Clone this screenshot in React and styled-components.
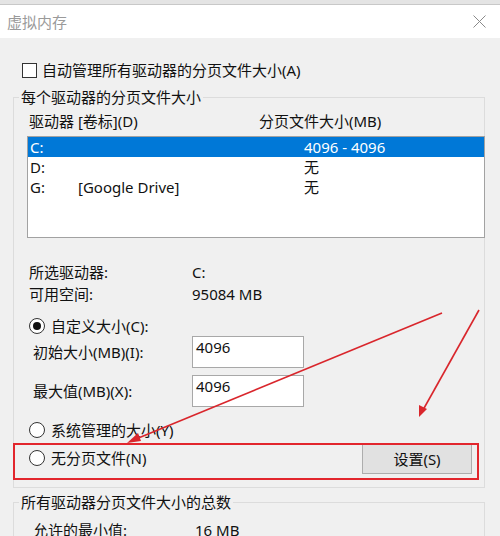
import React from "react";
import styled, { createGlobalStyle } from "styled-components";

const Global = createGlobalStyle`
  html, body { margin: 0; padding: 0; }
  body {
    background: #f0f0f0;
    font-family: "Noto Sans", "Noto Sans CJK SC", sans-serif;
    font-size: 15px;
    color: #111;
  }
`;

const Page = styled.div`
  position: relative;
  width: 500px;
  height: 536px;
  overflow: hidden;
  background: #f0f0f0;
`;

const TopStrip = styled.div`
  height: 4px;
  background: #e4e4e4;
  border-bottom: 1px solid #c8c8c8;
`;

const TitleBar = styled.div`
  height: 33px;
  background: #fff;
  display: flex;
  align-items: center;
  justify-content: space-between;
  padding: 0 14px 0 7px;
`;

const Title = styled.span`
  color: #9a9a9a;
  font-size: 15px;
  line-height: 20px;
`;

const Body = styled.div`
  padding: 22px 15px 0 13px;
`;

const CheckRow = styled.label`
  display: flex;
  align-items: center;
  gap: 5px;
  height: 20px;
  line-height: 20px;
  padding-left: 9px;
`;

const CheckBox = styled.span`
  width: 13px;
  height: 13px;
  border: 1px solid #333;
  background: #fff;
  display: inline-block;
`;

const Group = styled.fieldset`
  margin: ${(p) => p.$mt}px 0 0 0;
  padding: 0 0 ${(p) => p.$pb}px 15px;
  border: 1px solid #dcdcdc;
  min-width: 0;
`;

const Legend = styled.legend`
  margin-left: -10px;
  padding: 0 2px;
  line-height: 20px;
  height: 20px;
`;

const HeaderRow = styled.div`
  display: grid;
  grid-template-columns: 230px 1fr;
  line-height: 20px;
  margin-top: 4px;
`;

const ListBox = styled.div`
  margin: 5px 0 0 -2px;
  margin-right: -1px;
  height: 100px;
  background: #fff;
  border: 1px solid #a2a2a2;
`;

const ListRow = styled.div`
  display: grid;
  grid-template-columns: 48px 226px 1fr;
  height: 20px;
  line-height: 20px;
  padding-left: 2px;
  background: ${(p) => (p.$selected ? "#0078d7" : "transparent")};
  color: ${(p) => (p.$selected ? "#fff" : "#111")};
`;

const InfoRow = styled.div`
  display: grid;
  grid-template-columns: 163px 1fr;
  line-height: 20px;
  margin-top: ${(p) => p.$mt || 0}px;
`;

const RadioRow = styled.div`
  display: flex;
  align-items: center;
  gap: 6px;
  height: 20px;
  line-height: 20px;
  margin-top: ${(p) => p.$mt || 0}px;
`;

const Radio = styled.span`
  width: 14px;
  height: 14px;
  border: 1px solid #333;
  border-radius: 50%;
  background: #fff;
  display: inline-flex;
  align-items: center;
  justify-content: center;
  &::after {
    content: "";
    width: 8px;
    height: 8px;
    border-radius: 50%;
    background: ${(p) => (p.$checked ? "#111" : "transparent")};
  }
`;

const FieldRow = styled.div`
  display: grid;
  grid-template-columns: 163px 112px;
  align-items: center;
  height: 32px;
  margin-top: ${(p) => p.$mt || 0}px;
`;

const FieldLabel = styled.span`
  padding-left: 4px;
  line-height: 20px;
`;

const ValueText = styled.span`
  padding-left: 3px;
`;

const Input = styled.div`
  height: 30px;
  border: 1px solid #a8a8a8;
  background: #fff;
  padding: 0 3px;
  line-height: 20px;
`;

const OptionRow = styled.div`
  display: flex;
  align-items: center;
  justify-content: space-between;
  height: 32px;
  margin-top: ${(p) => p.$mt || 0}px;
  padding-right: 12px;
`;

const Button = styled.button`
  width: 110px;
  height: 31px;
  background: #e1e1e1;
  border: 1px solid #adadad;
  font: inherit;
  color: #111;
  padding: 0;
`;

const RedBox = styled.div`
  position: absolute;
  left: 13px;
  top: 443px;
  width: 462px;
  height: 33px;
  border: 2px solid #e2262d;
  pointer-events: none;
`;

const Overlay = styled.svg`
  position: absolute;
  left: 0;
  top: 0;
  pointer-events: none;
`;

const CloseIcon = () => (
  <svg width="13" height="13" viewBox="0 0 13 13">
    <path d="M0.5 0.5 L12.5 12.5 M12.5 0.5 L0.5 12.5" stroke="#8a8a8a" strokeWidth="1" fill="none" />
  </svg>
);

export default function App() {
  return (
    <Page>
      <Global />
      <TopStrip />
      <TitleBar>
        <Title>虚拟内存</Title>
        <CloseIcon />
      </TitleBar>
      <Body>
        <CheckRow>
          <CheckBox />
          <span>自动管理所有驱动器的分页文件大小(A)</span>
        </CheckRow>
        <Group $mt={7} $pb={13}>
          <Legend>每个驱动器的分页文件大小</Legend>
          <HeaderRow>
            <span>驱动器 [卷标](D)</span>
            <span>分页文件大小(MB)</span>
          </HeaderRow>
          <ListBox>
            <ListRow $selected>
              <span>C:</span>
              <span></span>
              <span>4096 - 4096</span>
            </ListRow>
            <ListRow>
              <span>D:</span>
              <span></span>
              <span>无</span>
            </ListRow>
            <ListRow>
              <span>G:</span>
              <span>[Google Drive]</span>
              <span>无</span>
            </ListRow>
          </ListBox>
          <InfoRow $mt={24}>
            <span>所选驱动器:</span>
            <span>C:</span>
          </InfoRow>
          <InfoRow $mt={2}>
            <span>可用空间:</span>
            <span>95084 MB</span>
          </InfoRow>
          <RadioRow $mt={12}>
            <Radio $checked />
            <span>自定义大小(C):</span>
          </RadioRow>
          <FieldRow>
            <FieldLabel>初始大小(MB)(I):</FieldLabel>
            <Input>4096</Input>
          </FieldRow>
          <FieldRow $mt={7}>
            <FieldLabel>最大值(MB)(X):</FieldLabel>
            <Input>4096</Input>
          </FieldRow>
          <RadioRow $mt={13}>
            <Radio />
            <span>系统管理的大小(Y)</span>
          </RadioRow>
          <OptionRow $mt={2}>
            <RadioRow>
              <Radio />
              <span>无分页文件(N)</span>
            </RadioRow>
            <Button>设置(S)</Button>
          </OptionRow>
        </Group>
        <Group $mt={4} $pb={20}>
          <Legend>所有驱动器分页文件大小的总数</Legend>
          <InfoRow $mt={8}>
            <FieldLabel>允许的最小值:</FieldLabel>
            <ValueText>16 MB</ValueText>
          </InfoRow>
        </Group>
      </Body>
      <RedBox />
      <Overlay width="500" height="536" viewBox="0 0 500 536">
        <line x1="442" y1="313" x2="136" y2="439" stroke="#d9262c" strokeWidth="1.6" />
        <polygon points="127,443 138,433 141,441" fill="#d9262c" />
        <line x1="479" y1="310" x2="423" y2="410" stroke="#d9262c" strokeWidth="1.6" />
        <polygon points="419,417 419,405 427,409" fill="#d9262c" />
      </Overlay>
    </Page>
  );
}
